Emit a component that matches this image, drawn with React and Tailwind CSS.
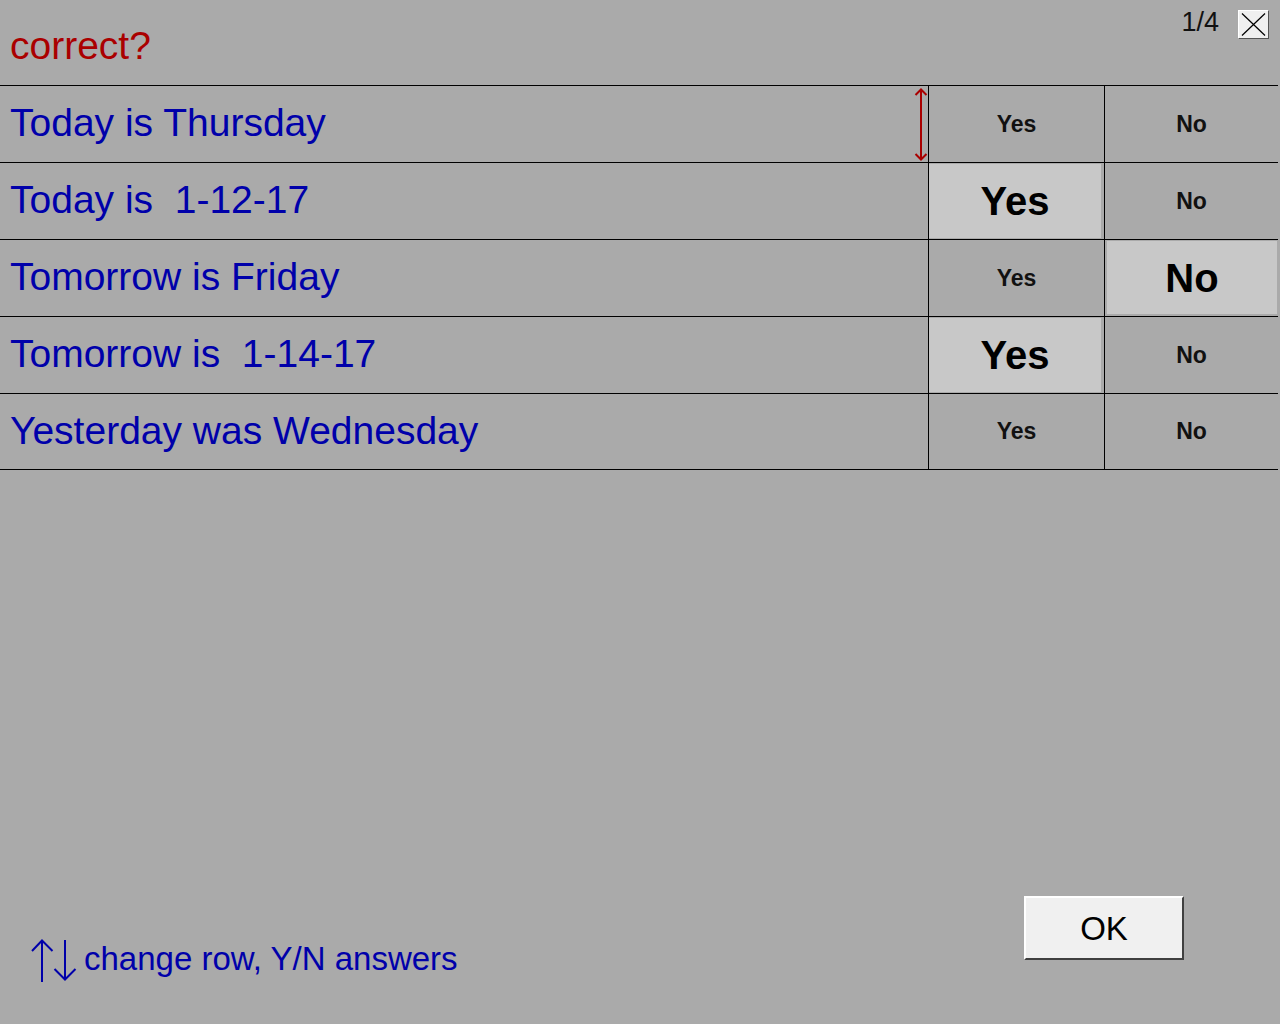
import React from "react";

const rows = [
  { text: "Today is Thursday", sel: null, current: true },
  { text: "Today is\u00a0\u00a01-12-17", sel: "yes" },
  { text: "Tomorrow is Friday", sel: "no" },
  { text: "Tomorrow is\u00a0\u00a01-14-17", sel: "yes" },
  { text: "Yesterday was Wednesday", sel: null },
];

function Cell({ label, selected, side }) {
  return (
    <div className={side === "yes" ? "w-[176px] border-l border-black flex" : "w-[174px] border-l border-black flex"}>
      {selected ? (
        <div
          className={
            side === "yes"
              ? "flex-1 mt-px mr-[3px] mb-[1px] bg-[#c8c8c8] flex items-center justify-center"
              : "flex-1 ml-[2px] mt-px mr-px mb-[2px] bg-[#c8c8c8] flex items-center justify-center"
          }
        >
          <span className="text-[40px] leading-none font-bold text-black">{label}</span>
        </div>
      ) : (
        <div className="flex-1 flex items-center justify-center">
          <span className="text-[23px] leading-none font-bold text-[#111]">{label}</span>
        </div>
      )}
    </div>
  );
}

export default function App() {
  return (
    <div className="w-[1280px] h-[1024px] bg-[#aaaaaa] flex flex-col font-['Liberation_Sans',Arial,sans-serif] overflow-hidden">
      {/* header */}
      <div className="h-[85px] flex justify-between items-start">
        <div className="pt-[26px] pl-[10px] text-[39px] leading-none text-[#aa0000]">correct?</div>
        <div className="flex items-start mt-[10px] mr-[11px]">
          <span className="text-[27px] leading-none text-[#111] mr-[19px] -mt-px">1/4</span>
          <div className="w-[31px] h-[29px] bg-[#f0f0f0] border border-t-white border-l-white border-r-[#555] border-b-[#555] flex items-center justify-center">
            <svg width="27" height="25" viewBox="0 0 27 25">
              <line x1="2" y1="1.5" x2="25" y2="23.5" stroke="#000" strokeWidth="1.2" />
              <line x1="25" y1="1.5" x2="2" y2="23.5" stroke="#000" strokeWidth="1.2" />
            </svg>
          </div>
        </div>
      </div>

      {/* table */}
      <div className="w-[1278px] border-b border-black">
        {rows.map((r, i) => (
          <div key={i} className={i === 4 ? "h-[76px] border-t border-black flex" : "h-[77px] border-t border-black flex"}>
            <div className="w-[928px] relative flex items-center pl-[10px] pb-[3px]">
              <span className="text-[39px] leading-none text-[#0000aa] whitespace-pre">{r.text}</span>
              {r.current && (
                <svg className="absolute right-0 top-[2px]" width="14" height="73" viewBox="0 0 14 73">
                  <line x1="7" y1="1" x2="7" y2="72" stroke="#aa0000" strokeWidth="2" />
                  <polyline points="1.5,7 7,1.5 12.5,7" fill="none" stroke="#aa0000" strokeWidth="2" />
                  <polyline points="1.5,66 7,71.5 12.5,66" fill="none" stroke="#aa0000" strokeWidth="2" />
                </svg>
              )}
            </div>
            <Cell label="Yes" selected={r.sel === "yes"} side="yes" />
            <Cell label="No" selected={r.sel === "no"} side="no" />
          </div>
        ))}
      </div>

      {/* footer */}
      <div className="mt-auto h-[128px] flex justify-between items-start">
        <div className="flex items-start ml-[30px] mt-[43px]">
          <svg width="50" height="44" viewBox="0 0 50 44">
            <line x1="12" y1="1" x2="12" y2="43" stroke="#0000aa" strokeWidth="2" />
            <polyline points="2,12 12,1.5 22.5,12" fill="none" stroke="#0000aa" strokeWidth="2" />
            <line x1="35" y1="1" x2="35" y2="41" stroke="#0000aa" strokeWidth="2" />
            <polyline points="24.5,30 35,40.5 45.5,30" fill="none" stroke="#0000aa" strokeWidth="2" />
          </svg>
          <span className="ml-[4px] mt-[3px] text-[33px] leading-none text-[#0000aa]">change row, Y/N answers</span>
        </div>
        <div className="mr-[96px] w-[160px] h-[64px] bg-[#f0f0f0] border-t-2 border-l-2 border-t-white border-l-white border-r-2 border-b-2 border-r-[#404040] border-b-[#404040] flex items-center justify-center">
          <span className="text-[33px] leading-none text-black">OK</span>
        </div>
      </div>
    </div>
  );
}
